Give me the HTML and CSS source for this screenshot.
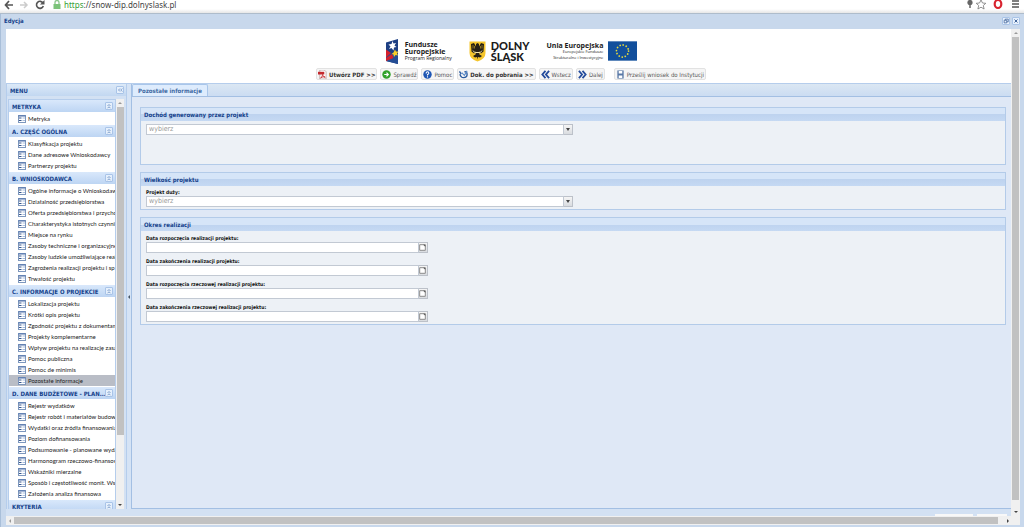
FILE: index.html
```html
<!DOCTYPE html>
<html lang="pl">
  <head>
    <meta charset="UTF-8" />
    <meta name="viewport" content="width=device-width, initial-scale=1.0" />
    <title>Edycja</title>
    <link rel="stylesheet" href="styles.css">
  </head>

  <body>
    <!-- shared icons -->
    <svg class="defs" width="0" height="0" aria-hidden="true">
      <symbol id="i-form" viewBox="0 0 16 16">
        <rect x="1" y="1" width="14" height="14" fill="#fff" stroke="#7d97bd" stroke-width="2" />
        <path d="M1 2h14" stroke="#4a6da8" stroke-width="2" />
        <path d="M2 6h5M2 11h5" stroke="#34558b" stroke-width="2" />
        <path d="M9 6h5M9 11h5" stroke="#a9bedd" stroke-width="2" />
      </symbol>
      <symbol id="i-up" viewBox="0 0 8 8">
        <path d="M2 4l2-2 2 2M2 7l2-2 2 2" fill="none" stroke="#5a82b8" />
      </symbol>
      <symbol id="i-cal" viewBox="0 0 10 10">
        <path d="M1 1h8v8H1z" fill="#fff" stroke="#888" stroke-width="1.4" />
        <path d="M6 1h3v3z" fill="#555" />
      </symbol>
    </svg>

    <header class="browser">
      <svg class="nav" viewBox="0 0 46 12" aria-hidden="true">
        <path d="M13 5H6M9 1L5.500 5l3.500 4" fill="none" stroke="#555" stroke-width="1.700" />
        <path d="M20 5h7M24 2l3 3-3 3" fill="none" stroke="#ccc" stroke-width="1.500" />
        <path d="M43 3a3.500 3.500 0 1 0 .3 3" fill="none" stroke="#555" stroke-width="1.600" />
        <path d="M44.500 0v4.500H40z" fill="#555" />
      </svg>
      <svg class="lock" viewBox="0 0 8 10" aria-hidden="true">
        <path d="M2 5V2.500a2 2 0 0 1 4 0V5" fill="none" stroke="#8bc68b" stroke-width="1.300" />
        <rect x="0.500" y="4" width="7" height="5" fill="#7cc37a" />
      </svg>
      <span class="url"><span class="secure">https</span>://snow-dip.dolnyslask.pl</span>
      <svg class="tools" viewBox="0 0 56 12" aria-hidden="true">
        <circle cx="4" cy="2.500" r="2.600" fill="#666" />
        <path d="M4 4v4" stroke="#666" stroke-width="1.500" />
        <path d="M15 0l1.500 3 3.300.3-2.500 2.200.8 3.500-3.100-1.800L11.900 9l.8-3.500-2.500-2.200 3.300-.3z" fill="#fff" stroke="#777" stroke-width=".8" />
        <ellipse cx="32" cy="4" rx="3.300" ry="4" fill="none" stroke="#d8232f" stroke-width="2.200" />
        <path d="M46 1h7M46 4h7M46 7h7" stroke="#555" stroke-width="1.500" />
      </svg>
    </header>

    <div class="window">
      <div class="window-title">
        <h1>Edycja</h1>
        <button type="button" class="tool" aria-label="Przywróć">
          <svg viewBox="0 0 8 8"><path d="M3 3V1.500h4V5H5M1.500 3h3.500v3.500H1.500z" fill="none" stroke="#3d6298" /></svg>
        </button>
        <button type="button" class="tool" aria-label="Zamknij">
          <svg viewBox="0 0 8 8"><path d="M2 2l4 4M6 2L2 6" stroke="#3d6298" stroke-width="1.300" /></svg>
        </button>
      </div>

      <div class="viewport">
        <div class="page">
          <div class="top">
            <div class="logos">
              <div class="logo">
                <svg class="fe" viewBox="0 0 30 50" aria-hidden="true">
                  <path d="M2 7L26 0v50L2 44z" fill="#1d3f83" />
                  <path d="M2 29l24 1v20L2 44z" fill="#244d95" />
                  <path d="M2 21l10 7-10 9z" fill="#d5202c" />
                  <path d="M15 4l2 5 5-1-3 5 4 3-5 1-1 6-4-5-5 2 3-5-4-4 6-1z" fill="#fff" />
                  <path d="M20 21l2 4 5 0-3 4 2 4-5-1-3 4-1-5-4-1 4-3z" fill="#f8cf27" />
                  <path d="M2 38l12-8 3 8-15 6z" fill="#d5202c" />
                </svg>
                <p class="logo-text"><b>Fundusze<br>Europejskie</b><small>Program Regionalny</small></p>
              </div>
              <div class="logo">
                <svg class="shield" viewBox="0 0 34 42" aria-hidden="true">
                  <path d="M1 1h32v23q0 12-16 17Q1 36 1 24z" fill="#f5c52c" />
                  <path d="M17 4l3 2v5l4-7 6 2-1 15-5 4-4-3 1 5 5 3-4 3-4-1-1 5-1-5-4 1-4-3 5-3 1-5-4 3-5-4L4 6l6-2 4 7V6z" fill="#262015" />
                  <path d="M7 17q2 6 10 5 8 1 10-5-1 8-10 7-9 1-10-7z" fill="#f8e8b0" />
                  <path d="M8 8v7M11 10v5M26 8v7M23 10v5" stroke="#f5c52c" />
                </svg>
                <p class="dolny-text">DOLNY<br>ŚLĄSK</p>
              </div>
              <div class="logo">
                <p class="logo-text eu-text"><b>Unia Europejska</b><small>Europejskie Fundusze<br>Strukturalne i Inwestycyjne</small></p>
                <svg class="flag" viewBox="0 0 60 40" aria-hidden="true">
                  <path d="M0 0h60v40H0z" fill="#124f9c" />
                  <circle cx="30" cy="20" r="12.500" fill="none" stroke="#e8dc3c" stroke-width="3.600" stroke-linecap="round" stroke-dasharray=".1 6.445" />
                </svg>
              </div>
            </div>

            <div class="toolbar">
              <button type="button" class="strong">
                <svg viewBox="0 0 10 10"><path d="M2 0h5l2 2v8H2z" fill="#fff" stroke="#a88" stroke-width=".7" /><path d="M0 2h7v3H0z" fill="#c3282d" /><path d="M3 9c2-2 2-4 2-4s1 3 3 3c-2-1-4 0-5 1z" fill="none" stroke="#c3282d" /></svg>
                Utwórz PDF &gt;&gt;
              </button>
              <button type="button">
                <svg viewBox="0 0 10 10"><circle cx="5" cy="5" r="4.700" fill="#32a12b" /><path d="M2.500 5H7M5 3l2 2-2 2" fill="none" stroke="#fff" stroke-width="1.300" /></svg>
                Sprawdź
              </button>
              <button type="button">
                <svg viewBox="0 0 10 10"><circle cx="5" cy="5" r="4.700" fill="#1e56b4" /><path d="M3.500 4q0-2 1.500-2t1.500 1.500Q6.500 4.500 5 5v1M5 7v1.200" fill="none" stroke="#fff" stroke-width="1.200" /></svg>
                Pomoc
              </button>
              <button type="button" class="strong">
                <svg viewBox="0 0 10 10"><path d="M.5 1.500l2 3M1 4.500q1 4 4 4 4 0 4-3.500T6 2" fill="none" stroke="#295a9f" stroke-width="1.500" /><path d="M3 3l3 3 3-5" fill="none" stroke="#5c8ccb" stroke-width="1.300" /></svg>
                Dok. do pobrania &gt;&gt;
              </button>
              <button type="button">
                <svg viewBox="0 0 10 10"><path d="M5 1L1.500 5 5 9M9 1L5.500 5 9 9" fill="none" stroke="#244b9c" stroke-width="2" /></svg>
                Wstecz
              </button>
              <button type="button">
                <svg viewBox="0 0 10 10"><path d="M1 1l3.500 4L1 9M5 1l3.500 4L5 9" fill="none" stroke="#244b9c" stroke-width="2" /></svg>
                Dalej
              </button>
              <button type="button" class="send">
                <svg viewBox="0 0 10 10"><path d="M1.500.5h7v9h-7z" fill="#5878a6" /><path d="M3 1h4v3H3zM3 6h4v3H3z" fill="#fff" /></svg>
                Prześlij wniosek do Instytucji
              </button>
            </div>
          </div>

          <div class="columns">
            <aside class="menu">
              <div class="menu-title">
                <h2>MENU</h2>
                <button type="button" class="tool" aria-label="Zwiń menu">
                  <svg viewBox="0 0 8 8"><path d="M4 2L2 4l2 2M7 2L5 4l2 2" fill="none" stroke="#5a82b8" /></svg>
                </button>
              </div>
              <div class="menu-body">
                <nav class="menu-list">
                  <section>
                    <h3><span>METRYKA</span><button type="button" class="tool" aria-label="Zwiń"><svg><use href="#i-up" /></svg></button></h3>
                    <ul>
                      <li><a href="#"><svg><use href="#i-form" /></svg>Metryka</a></li>
                    </ul>
                  </section>
                  <section>
                    <h3><span>A. CZĘŚĆ OGÓLNA</span><button type="button" class="tool" aria-label="Zwiń"><svg><use href="#i-up" /></svg></button></h3>
                    <ul>
                      <li><a href="#"><svg><use href="#i-form" /></svg>Klasyfikacja projektu</a></li>
                      <li><a href="#"><svg><use href="#i-form" /></svg>Dane adresowe Wnioskodawcy</a></li>
                      <li><a href="#"><svg><use href="#i-form" /></svg>Partnerzy projektu</a></li>
                    </ul>
                  </section>
                  <section>
                    <h3><span>B. WNIOSKODAWCA</span><button type="button" class="tool" aria-label="Zwiń"><svg><use href="#i-up" /></svg></button></h3>
                    <ul>
                      <li><a href="#"><svg><use href="#i-form" /></svg>Ogólne informacje o Wnioskodaw</a></li>
                      <li><a href="#"><svg><use href="#i-form" /></svg>Działalność przedsiębiorstwa</a></li>
                      <li><a href="#"><svg><use href="#i-form" /></svg>Oferta przedsiębiorstwa i przycho</a></li>
                      <li><a href="#"><svg><use href="#i-form" /></svg>Charakterystyka istotnych czynnik</a></li>
                      <li><a href="#"><svg><use href="#i-form" /></svg>Miejsce na rynku</a></li>
                      <li><a href="#"><svg><use href="#i-form" /></svg>Zasoby techniczne i organizacyjne</a></li>
                      <li><a href="#"><svg><use href="#i-form" /></svg>Zasoby ludzkie umożliwiające real</a></li>
                      <li><a href="#"><svg><use href="#i-form" /></svg>Zagrożenia realizacji projektu i sp</a></li>
                      <li><a href="#"><svg><use href="#i-form" /></svg>Trwałość projektu</a></li>
                    </ul>
                  </section>
                  <section>
                    <h3><span>C. INFORMACJE O PROJEKCIE</span><button type="button" class="tool" aria-label="Zwiń"><svg><use href="#i-up" /></svg></button></h3>
                    <ul>
                      <li><a href="#"><svg><use href="#i-form" /></svg>Lokalizacja projektu</a></li>
                      <li><a href="#"><svg><use href="#i-form" /></svg>Krótki opis projektu</a></li>
                      <li><a href="#"><svg><use href="#i-form" /></svg>Zgodność projektu z dokumentam</a></li>
                      <li><a href="#"><svg><use href="#i-form" /></svg>Projekty komplementarne</a></li>
                      <li><a href="#"><svg><use href="#i-form" /></svg>Wpływ projektu na realizację zasa</a></li>
                      <li><a href="#"><svg><use href="#i-form" /></svg>Pomoc publiczna</a></li>
                      <li><a href="#"><svg><use href="#i-form" /></svg>Pomoc de minimis</a></li>
                      <li><a href="#" class="active"><svg><use href="#i-form" /></svg>Pozostałe informacje</a></li>
                    </ul>
                  </section>
                  <section>
                    <h3><span>D. DANE BUDŻETOWE - PLAN...</span><button type="button" class="tool" aria-label="Zwiń"><svg><use href="#i-up" /></svg></button></h3>
                    <ul>
                      <li><a href="#"><svg><use href="#i-form" /></svg>Rejestr wydatków</a></li>
                      <li><a href="#"><svg><use href="#i-form" /></svg>Rejestr robót i materiałów budow</a></li>
                      <li><a href="#"><svg><use href="#i-form" /></svg>Wydatki oraz źródła finansowania</a></li>
                      <li><a href="#"><svg><use href="#i-form" /></svg>Poziom dofinansowania</a></li>
                      <li><a href="#"><svg><use href="#i-form" /></svg>Podsumowanie - planowane wyda</a></li>
                      <li><a href="#"><svg><use href="#i-form" /></svg>Harmonogram rzeczowo-finansow</a></li>
                      <li><a href="#"><svg><use href="#i-form" /></svg>Wskaźniki mierzalne</a></li>
                      <li><a href="#"><svg><use href="#i-form" /></svg>Sposób i częstotliwość monit. Wsk</a></li>
                      <li><a href="#"><svg><use href="#i-form" /></svg>Założenia analiza finansowa</a></li>
                    </ul>
                  </section>
                  <section>
                    <h3><span>KRYTERIA</span><button type="button" class="tool" aria-label="Zwiń"><svg><use href="#i-up" /></svg></button></h3>
                  </section>
                </nav>
                <div class="scroll menu-scroll"><i class="arrow up"></i><i class="thumb"></i><i class="arrow down"></i></div>
              </div>
            </aside>

            <div class="splitter"></div>

            <main class="main">
              <div class="tabs"><button type="button" class="tab">Pozostałe informacje</button></div>
              <form class="content">
                <section class="panel first">
                  <h2>Dochód generowany przez projekt</h2>
                  <div class="panel-body">
                    <div class="combo">
                      <select aria-label="Dochód generowany przez projekt"><option>wybierz</option></select>
                      <i class="trigger"></i>
                    </div>
                  </div>
                </section>

                <section class="panel">
                  <h2>Wielkość projektu</h2>
                  <div class="panel-body">
                    <label for="duzy">Projekt duży:</label>
                    <div class="combo">
                      <select id="duzy"><option>wybierz</option></select>
                      <i class="trigger"></i>
                    </div>
                  </div>
                </section>

                <section class="panel">
                  <h2>Okres realizacji</h2>
                  <div class="panel-body dates">
                    <label for="start">Data rozpoczęcia realizacji projektu:</label>
                    <div class="date"><input type="text" id="start" /><button type="button" aria-label="Kalendarz"><svg><use href="#i-cal" /></svg></button></div>
                    <label for="end">Data zakończenia realizacji projektu:</label>
                    <div class="date"><input type="text" id="end" /><button type="button" aria-label="Kalendarz"><svg><use href="#i-cal" /></svg></button></div>
                    <label for="rstart">Data rozpoczęcia rzeczowej realizacji projektu:</label>
                    <div class="date"><input type="text" id="rstart" /><button type="button" aria-label="Kalendarz"><svg><use href="#i-cal" /></svg></button></div>
                    <label for="rend">Data zakończenia rzeczowej realizacji projektu:</label>
                    <div class="date"><input type="text" id="rend" /><button type="button" aria-label="Kalendarz"><svg><use href="#i-cal" /></svg></button></div>
                  </div>
                </section>
              </form>
            </main>
          </div>

          <div class="footer"><i></i><i></i></div>
        </div>
        <div class="scroll page-scroll"><i class="arrow up"></i><i class="thumb"></i><i class="arrow down"></i></div>
        <div class="scroll horizontal"><i class="arrow prev"></i><i class="thumb"></i><i class="arrow next"></i></div>
      </div>
    </div>
  </body>
</html>
```
FILE: styles.css
```css
* {
  box-sizing: border-box;
}

body {
  margin: 0;
  height: 100vh;
  display: flex;
  flex-direction: column;
  overflow: hidden;
  font-family: "DejaVu Sans Condensed", "DejaVu Sans", sans-serif;
  font-size: 6px;
  line-height: 11px;
  color: #222;
  background: #cbdaee;
}

h1, h2, h3, p, ul {
  margin: 0;
  padding: 0;
}

h1, h2, h3 {
  font-size: 6px;
  color: #15428b;
}

button, input, select {
  font: inherit;
  margin: 0;
}

svg {
  display: block;
  flex: none;
}

.defs {
  position: absolute;
}

/* browser bar */
.browser {
  height: 14px;
  flex: none;
  display: flex;
  background: linear-gradient(#fff 9px, #e6e6e6 13px, #aebccb 13px);
}

.nav {
  width: 46px;
  height: 12px;
}

.lock {
  width: 8px;
  height: 10px;
  margin: 0 3px 0 7px;
}

.url {
  flex: 1;
  font-family: "Noto Sans", "Open Sans", sans-serif;
  font-size: 8px;
  line-height: 9px;
  color: #444;
}

.secure {
  color: #35a035;
}

.tools {
  width: 56px;
  height: 12px;
  margin-right: 2px;
}

/* window */
.window {
  flex: 1;
  min-height: 0;
  display: flex;
  flex-direction: column;
  padding: 0 4px 2px 5px;
  border-left: 1px solid #a9bfd9;
  background: #c8d8ec;
}

.window-title {
  height: 15px;
  flex: none;
  display: flex;
  align-items: center;
  gap: 2px;
  padding-bottom: 2px;
}

.window-title h1 {
  flex: 1;
  margin-left: -2px;
}

.tool {
  width: 8px;
  height: 8px;
  flex: none;
  padding: 0;
  border: 1px solid #a9c4e8;
  border-radius: 1px;
  background: #e6f0fc;
}

.tool svg {
  width: 6px;
  height: 6px;
}

.viewport {
  flex: 1;
  min-height: 0;
  display: grid;
  grid-template: minmax(0, 1fr) 9px / minmax(0, 1fr) 9px;
  background: #f0f0f0;
}

.page {
  min-height: 0;
  display: flex;
  flex-direction: column;
  background: #d3e1f3;
}

.top {
  flex: none;
  padding-top: 8px;
  background: #fff;
  border-bottom: 1px solid #b5cdec;
}

.logos {
  height: 28px;
  display: flex;
  justify-content: center;
  align-items: center;
  gap: 17px;
  padding-left: 5px;
  font-family: "Open Sans", sans-serif;
  color: #1b1b1b;
}

.logo {
  display: flex;
  align-items: center;
  gap: 5px;
}

.fe {
  width: 15px;
  height: 25px;
}

.shield {
  width: 17px;
  height: 21px;
}

.flag {
  width: 29px;
  height: 20px;
}

.logo-text {
  font-size: 7px;
  line-height: 7px;
}

.logo-text small {
  display: block;
  font-size: 5px;
  line-height: 6px;
}

.eu-text {
  text-align: right;
}

.eu-text small {
  font-size: 4px;
  line-height: 6px;
}

.dolny-text {
  font-family: Lato, sans-serif;
  font-size: 11px;
  font-weight: 900;
  line-height: 11px;
}

.toolbar {
  height: 18px;
  display: flex;
  justify-content: center;
  align-items: center;
  gap: 3px;
  padding-left: 5px;
}

.toolbar button {
  height: 12px;
  display: flex;
  align-items: center;
  gap: 2px;
  padding: 0 1px;
  border: 1px solid #e2e2e2;
  border-radius: 2px;
  background: #f5f5f5;
  color: #555;
  white-space: nowrap;
}

.toolbar svg {
  width: 9px;
  height: 9px;
}

.toolbar .strong {
  font-weight: bold;
  color: #333;
}

.toolbar .send {
  margin-left: 6px;
}

/* left menu */
.columns {
  flex: 1;
  min-height: 0;
  display: flex;
}

.menu {
  width: 121px;
  flex: none;
  display: flex;
  flex-direction: column;
  border-left: 1px solid #b5cdec;
  border-right: 1px solid #b5cdec;
}

.menu-title {
  height: 12px;
  flex: none;
  display: flex;
  align-items: center;
  justify-content: space-between;
  padding: 0 2px 0 3px;
  background: linear-gradient(#dce9f8, #c2d7f1);
}

.menu-body {
  flex: 1;
  min-height: 0;
  display: flex;
  padding: 3px 2px 0 1px;
}

.menu-list {
  flex: 1;
  min-width: 0;
  overflow: hidden;
  border: 1px solid #b5cdec;
  border-bottom: 0;
  background: #fff;
}

.menu-list h3 {
  height: 12px;
  display: flex;
  align-items: center;
  padding: 0 2px 0 3px;
  background: linear-gradient(#d9e8fb, #bdd5f3);
  white-space: nowrap;
}

.menu-list h3 span {
  flex: 1;
  min-width: 0;
}

.menu-list ul {
  padding: 1px 0;
  list-style: none;
}

.menu-list a {
  height: 11px;
  display: flex;
  align-items: center;
  gap: 2px;
  padding-left: 9px;
  font-family: Lato, sans-serif;
  color: #222;
  text-decoration: none;
  white-space: nowrap;
}

.menu-list a svg {
  width: 8px;
  height: 8px;
}

.menu-list .active {
  background: #b9bdc6;
}

.splitter {
  width: 4px;
  flex: none;
  display: flex;
  align-items: center;
  justify-content: center;
  background: #d5e3f5;
}

.splitter::before {
  content: "";
  border: 2px solid transparent;
  border-left: 0;
  border-right-color: #456;
}

/* form area */
.main {
  flex: 1;
  min-width: 0;
  display: flex;
  flex-direction: column;
  border: 1px solid #a3bfe3;
  border-width: 0 0 1px 1px;
}

.tabs {
  height: 13px;
  flex: none;
  display: flex;
  align-items: end;
  background: linear-gradient(#dbe7f3, #cbdcf2);
  border-bottom: 1px solid #a3bfe3;
}

.tab {
  height: 12px;
  padding: 0 5px;
  border: 1px solid #a9c6ea;
  border-bottom: 0;
  border-radius: 2px 2px 0 0;
  background: #deecfd;
  color: #416aa3;
  font-weight: bold;
  line-height: 10px;
}

.content {
  flex: 1;
  min-height: 0;
  display: flex;
  flex-direction: column;
  gap: 7px;
  padding: 10px 5px 0 8px;
  background: #dfe8f6;
}

.panel {
  border: 1px solid #b3cbe9;
  background: #edf1f6;
}

.panel h2 {
  height: 13px;
  padding-left: 3px;
  line-height: 13px;
  background: linear-gradient(#d6e5f8 50%, #bed3ef 50%, #c5d9f3);
}

.panel-body {
  padding: 2px 5px;
}

.first .panel-body {
  min-height: 43px;
  padding-top: 3px;
}

.panel label {
  display: block;
  font-size: 5px;
  font-weight: bold;
  line-height: 8px;
  color: #111;
}

.combo, .date {
  width: 50%;
  height: 11px;
  display: flex;
}

.date {
  width: 33%;
}

.dates {
  padding-top: 3px;
}

.dates label {
  margin-top: 4px;
}

.dates label:first-child {
  margin-top: 0;
}

.combo select, .date input {
  flex: 1;
  min-width: 0;
  padding: 0 2px;
  appearance: none;
  border: 1px solid #c2c9d3;
  border-radius: 0;
  background: #fff;
  color: #999;
}

.combo select {
  font-size: 7px;
  line-height: 9px;
}

.trigger, .date button {
  width: 9px;
  display: flex;
  align-items: center;
  justify-content: center;
  padding: 0;
  border: 1px solid #bcc1c9;
  border-left: 0;
  background: linear-gradient(#f5f5f5, #d9dce0);
}

.trigger::before {
  content: "";
  border: 2px solid transparent;
  border-top: 3px solid #444;
  border-bottom: 0;
}

.date svg {
  width: 7px;
  height: 7px;
}

.footer {
  height: 7px;
  flex: none;
  display: flex;
  justify-content: flex-end;
  gap: 4px;
  padding: 5px 4px 0;
  overflow: hidden;
}

.footer i {
  width: 38px;
  background: #f8f8f8;
}

.footer i + i {
  width: 30px;
}

/* scrollbars */
.scroll {
  display: flex;
  flex-direction: column;
  align-items: center;
  background: #f0f0f0;
}

.menu-scroll {
  width: 8px;
}

.thumb {
  width: 7px;
  background: #c1c1c1;
}

.page-scroll .thumb {
  flex: 0 1 95%;
}

.menu-scroll .thumb {
  flex: 0 1 80%;
}

.arrow {
  height: 8px;
  flex: none;
  display: flex;
  align-items: center;
}

.arrow::before {
  content: "";
  border: 2px solid transparent;
}

.up::before {
  border-top: 0;
  border-bottom-color: #999;
}

.down {
  margin-top: auto;
}

.down::before {
  border-bottom: 0;
  border-top-color: #444;
}

.horizontal {
  flex-direction: row;
  grid-column: 1 / -1;
}

.horizontal .thumb {
  width: 97%;
  height: 7px;
}

.prev, .next {
  width: 8px;
  justify-content: center;
}

.prev::before {
  border-left: 0;
  border-right-color: #999;
}

.next {
  margin-left: auto;
  margin-right: 8px;
}

.next::before {
  border-right: 0;
  border-left-color: #444;
}
```
